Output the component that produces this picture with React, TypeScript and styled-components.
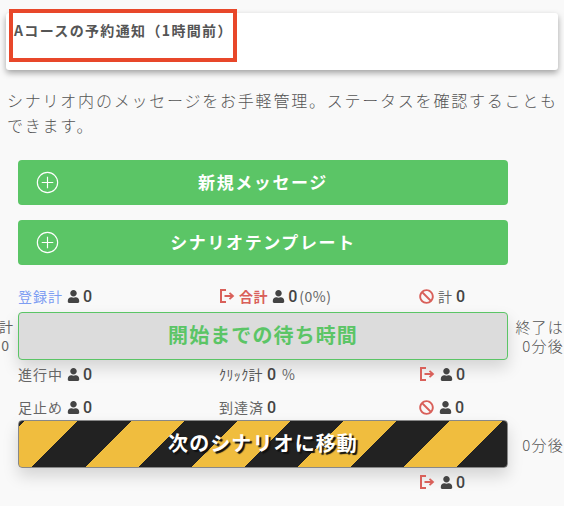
import React from 'react';
import styled, { createGlobalStyle } from 'styled-components';
import { FaUser, FaBan } from 'react-icons/fa';

const GlobalStyle = createGlobalStyle`
  html, body {
    margin: 0;
    padding: 0;
    background: #f9f9f9;
    overflow: hidden;
  }
  body {
    font-family: "Noto Sans CJK JP", "Noto Sans", sans-serif;
    color: #666;
  }
`;

const LogoutIcon: React.FC = () => (
  <ExitSvg viewBox="0 0 16 16" fill="none" stroke="#d9605a" strokeWidth="2">
    <path d="M7 2H2v12h5" />
    <path d="M5.5 8H13" />
    <path d="M10.5 4.8 14 8l-3.5 3.2" strokeWidth="1.8" />
  </ExitSvg>
);

const PlusIcon: React.FC = () => (
  <PlusSvg viewBox="0 0 24 24" fill="none" stroke="#fff" strokeWidth="1.2">
    <circle cx="12" cy="12" r="10.6" />
    <path d="M12 6v12M6 12h12" />
  </PlusSvg>
);

const Person: React.FC = () => (
  <PersonWrap>
    <FaUser />
  </PersonWrap>
);

export default function App() {
  return (
    <Page>
      <GlobalStyle />
      <TitleCard>
        <TitleText>Aコースの予約通知（1時間前）</TitleText>
        <Highlight />
      </TitleCard>
      <Description>
        シナリオ内のメッセージをお手軽管理。ステータスを確認することもできます。
      </Description>

      <Actions>
        <ActionButton>
          <PlusIcon />
          新規メッセージ
        </ActionButton>
        <ActionButton>
          <PlusIcon />
          シナリオテンプレート
        </ActionButton>
      </Actions>

      <StatRow $top={18}>
        <Stat>
          <Label $color="#7d9df2">登録計</Label>
          <Person />
          <Count>0</Count>
        </Stat>
        <Stat>
          <LogoutIcon />
          <Label $color="#d9605a" $bold>合計</Label>
          <Person />
          <Count>0</Count>
          <Percent>(0%)</Percent>
        </Stat>
        <Stat>
          <BanIcon />
          <Label>計</Label>
          <Count>0</Count>
        </Stat>
      </StatRow>

      <BarRow $top={3}>
        <LeftSide>
          <span>合計</span>
          <LeftCount>0</LeftCount>
        </LeftSide>
        <WaitBar>開始までの待ち時間</WaitBar>
        <RightSide>
          <span>終了は</span>
          <span>0分後</span>
        </RightSide>
      </BarRow>

      <StatRow $top={1}>
        <Stat>
          <Label>進行中</Label>
          <Person />
          <Count>0</Count>
        </Stat>
        <Stat>
          <SmallLabel>ｸﾘｯｸ計</SmallLabel>
          <Count>0</Count>
          <Percent $gap>%</Percent>
        </Stat>
        <Stat>
          <LogoutIcon />
          <Person />
          <Count>0</Count>
        </Stat>
      </StatRow>

      <StatRow $top={7}>
        <Stat>
          <Label>足止め</Label>
          <Person />
          <Count>0</Count>
        </Stat>
        <Stat>
          <Label>到達済</Label>
          <Count>0</Count>
        </Stat>
        <Stat>
          <BanIcon />
          <Person />
          <Count>0</Count>
        </Stat>
      </StatRow>

      <BarRow $top={0}>
        <LeftSide />
        <StripeBar>次のシナリオに移動</StripeBar>
        <RightSide>
          <span>0分後</span>
        </RightSide>
      </BarRow>

      <StatRow $top={1}>
        <Stat />
        <Stat />
        <Stat>
          <LogoutIcon />
          <Person />
          <Count>0</Count>
        </Stat>
      </StatRow>
    </Page>
  );
}

// Styled components
const Page = styled.div`
  width: 564px;
  height: 506px;
  padding-top: 13px;
  box-sizing: border-box;
  overflow: hidden;
`;

const TitleCard = styled.div`
  position: relative;
  height: 57px;
  margin: 0 6px;
  background: #fff;
  border-radius: 3px;
  box-shadow: 0 3px 6px rgba(0, 0, 0, 0.35);
  padding: 7px 8px;
  box-sizing: border-box;
`;

const TitleText = styled.div`
  font-size: 14px;
  line-height: 21px;
  font-weight: 700;
  letter-spacing: 1.35px;
  color: #555;
`;

const Highlight = styled.div`
  position: absolute;
  left: 3px;
  top: -4px;
  width: 228px;
  height: 53px;
  box-sizing: border-box;
  border: 4px solid #e8472a;
`;

const Description = styled.p`
  margin: 18px 0 0;
  padding: 0 0 0 7px;
  font-size: 16px;
  font-weight: 300;
  line-height: 25px;
  letter-spacing: 1.78px;
  color: #555;
`;

const Actions = styled.div`
  display: flex;
  flex-direction: column;
  gap: 15px;
  margin: 22px 0 0 18px;
  width: 490px;
`;

const ActionButton = styled.div`
  position: relative;
  height: 45px;
  box-sizing: border-box;
  padding-bottom: 2px;
  display: flex;
  align-items: center;
  justify-content: center;
  background: #5bc566;
  border-radius: 4px;
  color: #fff;
  font-size: 17px;
  font-weight: 700;
  letter-spacing: 1.6px;
`;

const PlusSvg = styled.svg`
  position: absolute;
  left: 18px;
  top: 11px;
  width: 23px;
  height: 23px;
`;

const StatRow = styled.div<{ $top: number }>`
  display: grid;
  grid-template-columns: 201px 200px 1fr;
  height: 26px;
  margin-top: ${(p) => p.$top}px;
  padding-left: 18px;
  align-items: center;
`;

const Stat = styled.div`
  display: flex;
  align-items: center;
  gap: 3px;
  font-size: 14px;
  white-space: nowrap;
`;

const Label = styled.span<{ $color?: string; $bold?: boolean }>`
  color: ${(p) => p.$color || '#666'};
  font-weight: ${(p) => (p.$bold ? 700 : 400)};
  letter-spacing: ${(p) => (p.$bold ? '0.6px' : '1px')};
`;

const SmallLabel = styled.span`
  color: #555;
  font-size: 14px;
  letter-spacing: 0.4px;
  margin-right: 1px;
`;

const Count = styled.span`
  font-family: Roboto, "Noto Sans", sans-serif;
  font-weight: 500;
  font-size: 16px;
  color: #444;
`;

const Percent = styled.span<{ $gap?: boolean }>`
  color: #666;
  font-size: 14px;
  margin-left: ${(p) => (p.$gap ? '3px' : '-1px')};
  letter-spacing: 0.5px;
`;

const PersonWrap = styled.span`
  display: inline-flex;
  color: #444;
  font-size: 13px;
  margin: 0 0.5px;
`;

const ExitSvg = styled.svg`
  width: 16px;
  height: 16px;
  margin-right: 1px;
`;

const BanIcon = styled(FaBan)`
  width: 15px;
  height: 15px;
  color: #d9605a;
  margin-right: 1px;
`;

const BarRow = styled.div<{ $top: number }>`
  display: grid;
  grid-template-columns: 18px 490px 1fr;
  height: 48px;
  margin-top: ${(p) => p.$top}px;
  align-items: center;
`;

const LeftSide = styled.div`
  display: flex;
  flex-direction: column;
  align-items: flex-end;
  padding-right: 5px;
  font-size: 14px;
  line-height: 19px;
  white-space: nowrap;
`;

const LeftCount = styled.span`
  padding-right: 4px;
`;

const RightSide = styled.div`
  display: flex;
  flex-direction: column;
  align-items: flex-end;
  font-size: 15px;
  font-weight: 300;
  line-height: 19px;
  letter-spacing: 1.2px;
  white-space: nowrap;
  color: #555;
`;

const WaitBar = styled.div`
  height: 48px;
  box-sizing: border-box;
  padding-bottom: 3px;
  display: flex;
  align-items: center;
  justify-content: center;
  border: 1px solid #5bc566;
  border-radius: 4px;
  background: #dcdcdc;
  color: #5bc566;
  font-size: 20px;
  font-weight: 700;
  letter-spacing: 1.1px;
  box-shadow: 0 8px 16px rgba(0, 0, 0, 0.15);
`;

const StripeBar = styled.div`
  height: 48px;
  box-sizing: border-box;
  padding-bottom: 3px;
  display: flex;
  align-items: center;
  justify-content: center;
  border: 1px solid #888;
  border-radius: 4px;
  background: repeating-linear-gradient(
    135deg,
    #222 0 4.2px,
    #f0bd3e 4.2px 41.7px,
    #222 41.7px 75px
  );
  color: #fff;
  font-size: 20px;
  font-weight: 700;
  letter-spacing: 1.1px;
  text-shadow: 2px 2px 1px #111;
  box-shadow: 0 8px 16px rgba(0, 0, 0, 0.15);
`;
